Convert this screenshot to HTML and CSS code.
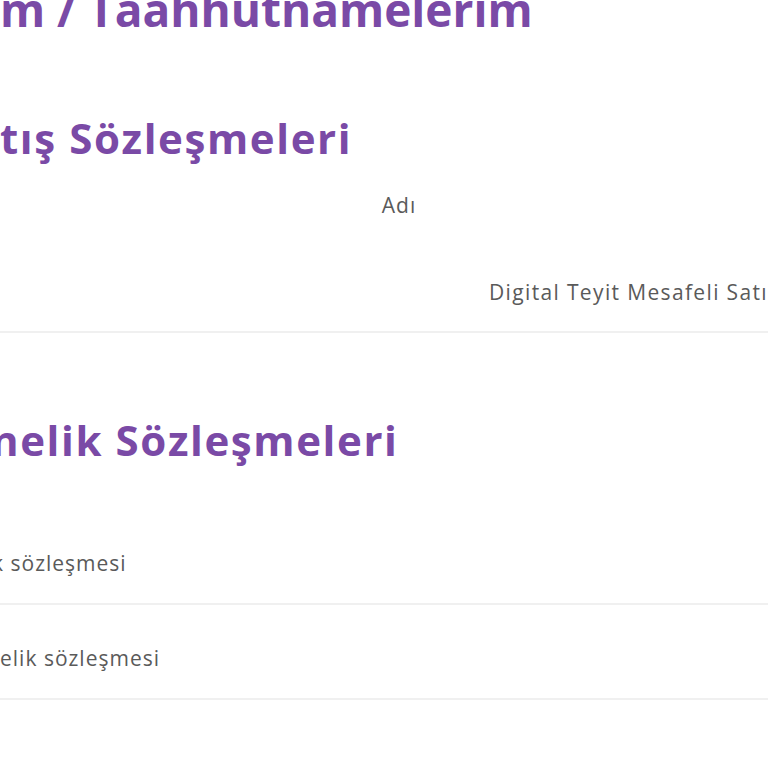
FILE: index.html
```html
<!DOCTYPE html>
<html lang="tr">
<head>
<meta charset="utf-8">
<title>Sözleşmelerim / Taahhutnamelerim</title>
<link rel="stylesheet" href="styles.css">
</head>
<body>
<main class="page">
  <h1 class="page-title">m / Taahhutnamelerim</h1>

  <section class="block block-sales">
    <h2 class="block-title">tış Sözleşmeleri</h2>
    <div class="table">
      <div class="thead">
        <div class="th">Adı</div>
      </div>
      <div class="row row-sales">
        <div class="cell cell-wide">Digital Teyit Mesafeli Satış Sözleşmesi</div>
      </div>
    </div>
  </section>

  <section class="block block-member">
    <h2 class="block-title clip-n">nelik Sözleşmeleri</h2>
    <div class="list">
      <div class="row"><div class="cell clip-k">k sözleşmesi</div></div>
      <div class="row"><div class="cell">elik sözleşmesi</div></div>
    </div>
  </section>
</main>
</body>
</html>
```

FILE: styles.css
```css
html, body {
  margin: 0;
  padding: 0;
  background: #ffffff;
  overflow: hidden;
}

.page {
  width: 768px;
  height: 768px;
  overflow: hidden;
  font-family: "Open Sans", "Liberation Sans", sans-serif;
  color: #5a5a5a;
}

.page-title {
  margin: -14px 0 0 0;
  font-size: 46px;
  line-height: 46px;
  font-weight: 700;
  color: #7a4aa6;
  white-space: nowrap;
}

.block-title {
  margin: 0;
  font-size: 42px;
  line-height: 48px;
  font-weight: 700;
  letter-spacing: 1.6px;
  color: #7a4aa6;
  white-space: nowrap;
}

.block-sales {
  padding-top: 82px;
}

.table {
  margin-top: 19px;
}

.thead {
  display: flex;
  justify-content: center;
  align-items: center;
  height: 48px;
}

.th {
  font-size: 21px;
  letter-spacing: 1px;
  padding-left: 30px;
}

.row {
  display: flex;
  align-items: flex-end;
  box-sizing: border-box;
  height: 95px;
  padding-bottom: 27px;
  border-bottom: 2px solid #f0f0f0;
  white-space: nowrap;
  overflow: hidden;
}

.row-sales {
  height: 104px;
  padding-left: 489px;
  padding-bottom: 26px;
}

.cell {
  font-size: 21px;
  line-height: 26px;
  letter-spacing: 1px;
}

.cell-wide {
  letter-spacing: 1.35px;
}

.block-member {
  padding-top: 83px;
}

.list {
  margin-top: 46px;
}

.clip-n {
  margin-left: -9px;
}

.clip-k {
  margin-left: -8px;
}
```
